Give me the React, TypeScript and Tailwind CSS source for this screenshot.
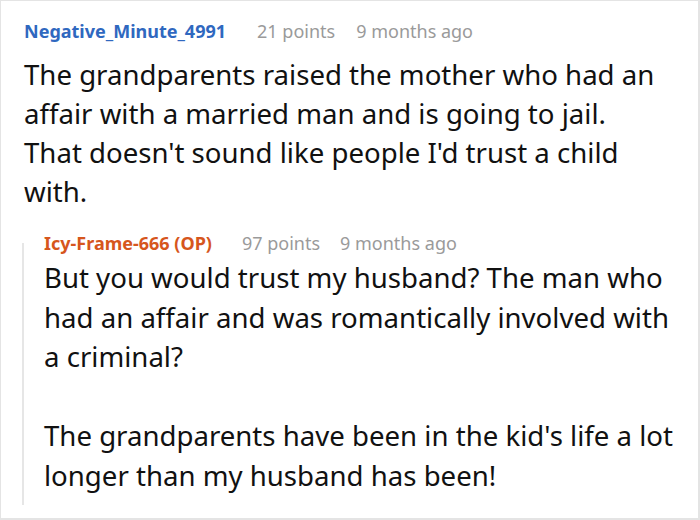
const font = { fontFamily: '"Noto Sans", "Open Sans", sans-serif' };

type Comment = {
  user: string;
  userColor: string;
  points: string;
  time: string;
  paragraphs: string[];
};

const parent: Comment = {
  user: "Negative_Minute_4991",
  userColor: "text-[#2f68bf]",
  points: "21 points",
  time: "9 months ago",
  paragraphs: [
    "The grandparents raised the mother who had an affair with a married man and is going to jail. That doesn't sound like people I'd trust a child with.",
  ],
};

const reply: Comment = {
  user: "Icy-Frame-666 (OP)",
  userColor: "text-[#d6561d]",
  points: "97 points",
  time: "9 months ago",
  paragraphs: [
    "But you would trust my husband? The man who had an affair and was romantically involved with a criminal?",
    "The grandparents have been in the kid's life a lot longer than my husband has been!",
  ],
};

const CommentHeader = ({ c, gap1, gap2 }: { c: Comment; gap1: string; gap2: string }) => (
  <div className="flex items-baseline text-[18px] leading-[24px] whitespace-nowrap">
    <span className={`font-bold ${c.userColor}`}>{c.user}</span>
    <span className={`${gap1} text-[#9a9a9a]`}>{c.points}</span>
    <span className={`${gap2} text-[#9a9a9a]`}>{c.time}</span>
  </div>
);

export default function App() {
  return (
    <div style={font} className="w-[700px] h-[520px] bg-white border border-r-2 border-b-2 border-[#e4e4e4] overflow-hidden">
      <div className="pl-[23px] pt-[18px]">
        <CommentHeader c={parent} gap1="ml-[31px]" gap2="ml-[21px]" />
        <div className="mt-[12px] pr-[28px] text-[27.6px] leading-[39px] text-[#111]">
          <p>{parent.paragraphs[0]}</p>
        </div>

        <div className="mt-[20px] flex -ml-[2px] mr-[12px]">
          <div className="w-[2px] bg-[#e6e6e6] mt-[12px] shrink-0" />
          <div className="pl-[20px] pb-[10px] flex-1">
            <CommentHeader c={reply} gap1="ml-[30px]" gap2="ml-[20px]" />
            <div className="mt-[3px] text-[27.6px] leading-[39.5px] text-[#111]">
              {reply.paragraphs.map((p, i) => (
                <p key={i} className={i > 0 ? "mt-[39.5px]" : ""}>
                  {p}
                </p>
              ))}
            </div>
          </div>
        </div>
      </div>
    </div>
  );
}
